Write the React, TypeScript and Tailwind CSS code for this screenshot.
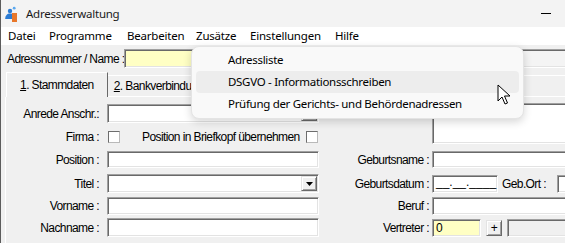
import React from 'react'

const ui = "font-['Segoe_UI','Noto_Sans',sans-serif]"
const form = "font-['Liberation_Sans',Arial,sans-serif] text-[12px] tracking-[-0.6px] text-black"

// klassische 3D-Ränder (Win32)
const sunken =
  'border border-t-[#a0a0a0] border-l-[#a0a0a0] border-r-white border-b-white shadow-[inset_1px_1px_0_#696969,inset_-1px_-1px_0_#e3e3e3]'
const raised =
  'border border-t-[#e3e3e3] border-l-[#e3e3e3] border-r-[#696969] border-b-[#696969] shadow-[inset_1px_1px_0_#ffffff,inset_-1px_-1px_0_#a0a0a0] bg-[#f0f0f0]'

function Box({ className = '', children }: { className?: string; children?: React.ReactNode }) {
  return <div className={`${sunken} flex items-center px-[3px] shrink-0 ${className}`}>{children}</div>
}

function Check() {
  return <div className="w-[12px] h-[12px] bg-white border border-t-[#6d6d6d] border-l-[#6d6d6d] border-r-[#b9b9b9] border-b-[#b9b9b9] shrink-0" />
}

function Label({ w, children }: { w: string; children: React.ReactNode }) {
  return <div className={`${w} text-right shrink-0 whitespace-nowrap`}>{children}</div>
}

function Combo({ className = '' }: { className?: string }) {
  return (
    <Box className={`bg-white justify-end pr-[1px] ${className}`}>
      <div className={`${raised} w-[16px] h-[15px] flex items-center justify-center`}>
        <svg width="7" height="4" viewBox="0 0 7 4">
          <path d="M0 0h7L3.5 4z" fill="#000" />
        </svg>
      </div>
    </Box>
  )
}

function AppIcon() {
  return (
    <svg width="16" height="16" viewBox="0 0 16 16" className="shrink-0">
      <circle cx="6" cy="5" r="2.2" fill="#2b7bd3" />
      <circle cx="10.2" cy="2.2" r="1.4" fill="#5aa8ef" />
      <path d="M1.2 13C1.2 9.6 3.2 7.6 6 7.6c1.8 0 3 .6 3.6 1.6V13z" fill="#2b7bd3" />
      <rect x="8" y="7" width="5" height="9" fill="#e8772a" />
    </svg>
  )
}

export default function App() {
  // Breiten aus dem Original abgelesen
  const menu: [string, string][] = [
    ['Datei', 'w-[41px]'],
    ['Programme', 'w-[78px]'],
    ['Bearbeiten', 'w-[69px]'],
    ['Zusätze', 'w-[54px]'],
    ['Einstellungen', 'w-[85px]'],
    ['Hilfe', 'w-[40px]'],
  ]
  const items = ['Adressliste', 'DSGVO - Informationsschreiben', 'Prüfung der Gerichts- und Behördenadressen']

  return (
    <div className="relative w-[565px] h-[243px] overflow-hidden bg-[#f0f0f0] border-l border-[#5c5c5c] flex flex-col">
      {/* Titelleiste */}
      <div className={`${ui} h-[27px] bg-[#f3f3f3] flex items-center pl-[3px] shrink-0`}>
        <AppIcon />
        <span className="ml-[6px] text-[11.5px] tracking-[-0.25px] text-[#1a1a1a]">Adressverwaltung</span>
        <div className="ml-auto mr-[14px] w-[10px] h-px bg-black" />
      </div>

      {/* Menüleiste */}
      <div className={`${ui} h-[18px] bg-white flex items-center pl-[7px] text-[11.5px] tracking-[-0.2px] text-black shrink-0`}>
        {menu.map(([m, w]) => (
          <span key={m} className={`${w} shrink-0 whitespace-nowrap`}>{m}</span>
        ))}
      </div>

      <div className={`${form} flex-1 flex flex-col`}>
        {/* Adressnummer */}
        <div className="flex items-center pl-[6px] pt-[4px]">
          <div className="w-[117px] shrink-0 whitespace-nowrap">Adressnummer / Name :</div>
          <Box className="w-[206px] h-[19px] bg-[#ffffc4]" />
          <Box className="ml-[4px] w-[300px] h-[19px] bg-[#f4f4f4]" />
        </div>

        {/* Register */}
        <div className="flex items-end h-[25px] mt-[4px] pl-[4px] shrink-0">
          <div className="w-px h-full" />
          <div className="w-[109px] h-[25px] border-t border-l border-white border-r border-r-[#696969] flex items-center justify-center pb-[1px]">
            <span><span className="underline">1</span>. Stammdaten</span>
          </div>
          <div className="w-[108px] h-[22px] border-t border-r border-t-white border-r-[#696969] border-b border-b-white flex items-center pl-[6px]">
            <span className="whitespace-nowrap"><span className="underline">2</span>. Bankverbindung</span>
          </div>
          <div className="w-[107px] h-[22px] border-t border-r border-t-white border-r-[#696969] border-b border-b-white" />
          <div className="w-[107px] h-[22px] border-t border-r border-t-white border-r-[#696969] border-b border-b-white" />
          <div className="w-[107px] h-[22px] border-t border-r border-t-white border-r-[#696969] border-b border-b-white" />
          <div className="w-[60px] h-[22px] border-t border-t-white border-b border-b-white flex items-center pl-[4px]">
            <span className="underline">6</span>.
          </div>
        </div>

        {/* Stammdaten */}
        <div className="ml-[4px] flex-1 border-l border-white flex flex-col">
          <div className="flex mt-[6px]">
            <div className="flex flex-col">
              <div className="flex items-center h-[19px] mt-[1px]">
                <Label w="w-[93px]">Anrede Anschr.:</Label>
                <Combo className="ml-[8px] w-[212px] h-[19px]" />
              </div>
              <div className="flex items-center h-[19px] mt-[4px]">
                <Label w="w-[93px]">Firma :</Label>
                <div className="ml-[9px]"><Check /></div>
                <span className="ml-[22px] whitespace-nowrap">Position in Briefkopf übernehmen</span>
                <div className="ml-auto mr-[1px]"><Check /></div>
              </div>
            </div>
            <Box className="ml-[113px] w-[200px] h-[41px] bg-white" />
          </div>

          <div className="flex items-center h-[17px] mt-[5px]">
            <Label w="w-[93px]">Position :</Label>
            <Box className="ml-[8px] w-[212px] h-[17px] bg-white" />
            <Label w="w-[110px]">Geburtsname :</Label>
            <Box className="ml-[3px] w-[200px] h-[17px] bg-white" />
          </div>

          <div className="flex items-center h-[19px] mt-[6px]">
            <Label w="w-[93px]">Titel :</Label>
            <Combo className="ml-[8px] w-[212px] h-[19px]" />
            <Label w="w-[110px]">Geburtsdatum :</Label>
            <Box className="ml-[3px] w-[66px] h-[18px] bg-white items-end pb-[1px] tracking-[0px]">__.__.____</Box>
            <span className="ml-[4px] w-[55px] shrink-0 whitespace-nowrap">Geb.Ort :</span>
            <Box className="w-[100px] h-[18px] bg-white" />
          </div>

          <div className="flex items-center h-[18px] mt-[4px]">
            <Label w="w-[93px]">Vorname :</Label>
            <Box className="ml-[8px] w-[212px] h-[18px] bg-white" />
            <Label w="w-[110px]">Beruf :</Label>
            <Box className="ml-[3px] w-[200px] h-[18px] bg-white" />
          </div>

          <div className="flex items-center h-[19px] mt-[3px]">
            <Label w="w-[93px]">Nachname :</Label>
            <Box className="ml-[8px] w-[212px] h-[19px] bg-white" />
            <Label w="w-[110px]">Vertreter :</Label>
            <Box className="ml-[3px] w-[49px] h-[18px] bg-[#ffffc4]">0</Box>
            <div className={`${raised} ml-[5px] w-[16px] h-[16px] flex items-center justify-center text-[12px] shrink-0`}>+</div>
            <Box className="ml-[5px] w-[100px] h-[18px] bg-[#f0f0f0]" />
          </div>
        </div>
      </div>

      {/* Menü Zusätze */}
      <div className={`${ui} absolute left-[190px] top-[46px] w-[333px] bg-[#f9f9f9] rounded-[8px] border border-[#e4e4e4] shadow-[0_3px_8px_rgba(0,0,0,0.16)] px-[4px] pt-[2px] pb-[3px] text-[11.5px] tracking-[-0.3px] text-black`}>
        {items.map((it, i) => (
          <div
            key={it}
            className={`h-[22px] flex items-center pl-[32px] rounded-[4px] ${i === 1 ? 'bg-[#ededed]' : ''}`}
          >
            {it}
          </div>
        ))}
      </div>

      {/* Mauszeiger */}
      <svg className="absolute left-[496px] top-[84px]" width="14" height="22" viewBox="0 0 14 22">
        <path d="M1 1v16l4-4 3 7 2.5-1-3-7H13z" fill="#fff" stroke="#000" strokeWidth="1" strokeLinejoin="miter" />
      </svg>
    </div>
  )
}
